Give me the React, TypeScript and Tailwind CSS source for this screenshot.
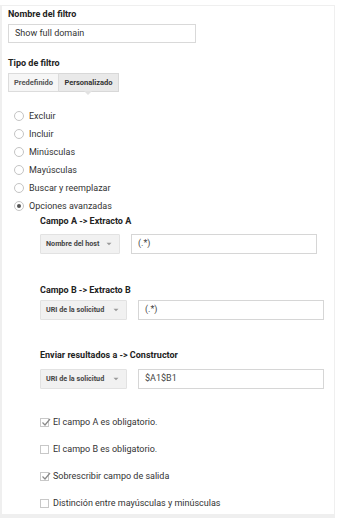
import React from "react";

const font = { fontFamily: "Roboto, 'Noto Sans', sans-serif" };

function Radio({ label, checked }: { label: string; checked?: boolean }) {
  return (
    <div className="flex h-[18px] items-center">
      <div className="ml-[6px] flex h-[10px] w-[10px] items-center justify-center rounded-full border border-[#c4c4c4] bg-white">
        {checked && <div className="h-[4px] w-[4px] rounded-full bg-[#555]" />}
      </div>
      <span className="ml-[5px] text-[9px] leading-[12px] text-[#333]">{label}</span>
    </div>
  );
}

function Select({ label, wide }: { label: string; wide?: boolean }) {
  return (
    <div
      className={
        "flex h-[20px] items-center justify-between rounded-[1px] border border-[#e2e2e2] bg-[#f1f1f1] pl-[5px] pr-[7px] " +
        (wide ? "w-[87px]" : "w-[80px]")
      }
    >
      <span className="whitespace-nowrap text-[7.2px] font-bold leading-[10px] text-[#444]">{label}</span>
      <svg width="6" height="4" viewBox="0 0 6 4" className="shrink-0">
        <path d="M0.5 0.8 L3 3.3 L5.5 0.8 Z" fill="#9a9a9a" />
      </svg>
    </div>
  );
}

function Field({ value }: { value: string }) {
  return (
    <div className="ml-[11px] flex h-[20px] w-[186px] items-center border border-[#d6d6d6] bg-white pl-[6px] text-[9px] text-[#444]">
      {value}
    </div>
  );
}

function Check({ label, checked }: { label: string; checked?: boolean }) {
  return (
    <div className="flex h-[12px] items-center">
      <div className="relative h-[9px] w-[9px] border border-[#c8c8c8] bg-white">
        {checked && (
          <svg className="absolute left-[0px] top-[-2px]" width="10" height="10" viewBox="0 0 10 10">
            <path d="M1.5 5.5 L4 8 L9 2" fill="none" stroke="#8a8a8a" strokeWidth="1.2" />
          </svg>
        )}
      </div>
      <span className="ml-[4px] text-[9px] leading-[12px] text-[#333]">{label}</span>
    </div>
  );
}

export default function App() {
  return (
    <div className="h-[524px] w-[340px] bg-white pt-[5px]" style={font}>
      <div className="h-[513px] w-[335px] border-t border-r border-l-2 border-b-4 border-[#efefef] bg-white">
        <div className="pl-[6px] pt-[2px]">
          <div className="h-[12px] text-[9px] font-bold leading-[12px] text-[#222]">Nombre del filtro</div>
          <div className="mt-[4px] flex h-[19px] w-[188px] items-center border border-[#d9d9d9] bg-white pl-[6px] text-[9px] text-[#333]">
            Show full domain
          </div>
          <div className="mt-[14px] h-[12px] text-[9px] font-bold leading-[12px] text-[#222]">Tipo de filtro</div>
          <div className="relative mt-[4px] flex h-[19px] w-[111px]">
            <div className="flex w-[51px] items-center justify-center border border-[#dcdcdc] bg-[#f6f6f6] text-[7.5px] font-bold text-[#555]">
              Predefinido
            </div>
            <div className="flex w-[60px] items-center justify-center border border-l-0 border-[#d8d8d8] bg-[#e9e9e9] text-[7.5px] font-bold text-[#333]">
              Personalizado
            </div>
            <div className="absolute left-[76px] top-[18px] h-0 w-0 border-x-[4px] border-t-[4px] border-x-transparent border-t-[#e2e2e2]" />
          </div>
          <div className="mt-[15px]">
            <Radio label="Excluir" />
            <Radio label="Incluir" />
            <Radio label="Minúsculas" />
            <Radio label="Mayúsculas" />
            <Radio label="Buscar y reemplazar" />
            <Radio label="Opciones avanzadas" checked />
          </div>
          <div className="ml-[32px]">
            <div className="h-[12px] text-[9px] font-bold leading-[12px] text-[#222]">Campo A -&gt; Extracto A</div>
            <div className="mt-[7px] flex">
              <Select label="Nombre del host" />
              <Field value="(.*)" />
            </div>
            <div className="mt-[30px] h-[12px] text-[9px] font-bold leading-[12px] text-[#222]">Campo B -&gt; Extracto B</div>
            <div className="mt-[4px] flex">
              <Select label="URI de la solicitud" wide />
              <Field value="(.*)" />
            </div>
            <div className="mt-[29px] h-[12px] text-[9px] font-bold leading-[12px] text-[#222]">Enviar resultados a -&gt; Constructor</div>
            <div className="mt-[8px] flex">
              <Select label="URI de la solicitud" wide />
              <Field value="$A1$B1" />
            </div>
            <div className="mt-[27px] flex flex-col gap-[15px]">
              <Check label="El campo A es obligatorio." checked />
              <Check label="El campo B es obligatorio." />
              <Check label="Sobrescribir campo de salida" checked />
              <Check label="Distinción entre mayúsculas y minúsculas" />
            </div>
          </div>
        </div>
      </div>
    </div>
  );
}
